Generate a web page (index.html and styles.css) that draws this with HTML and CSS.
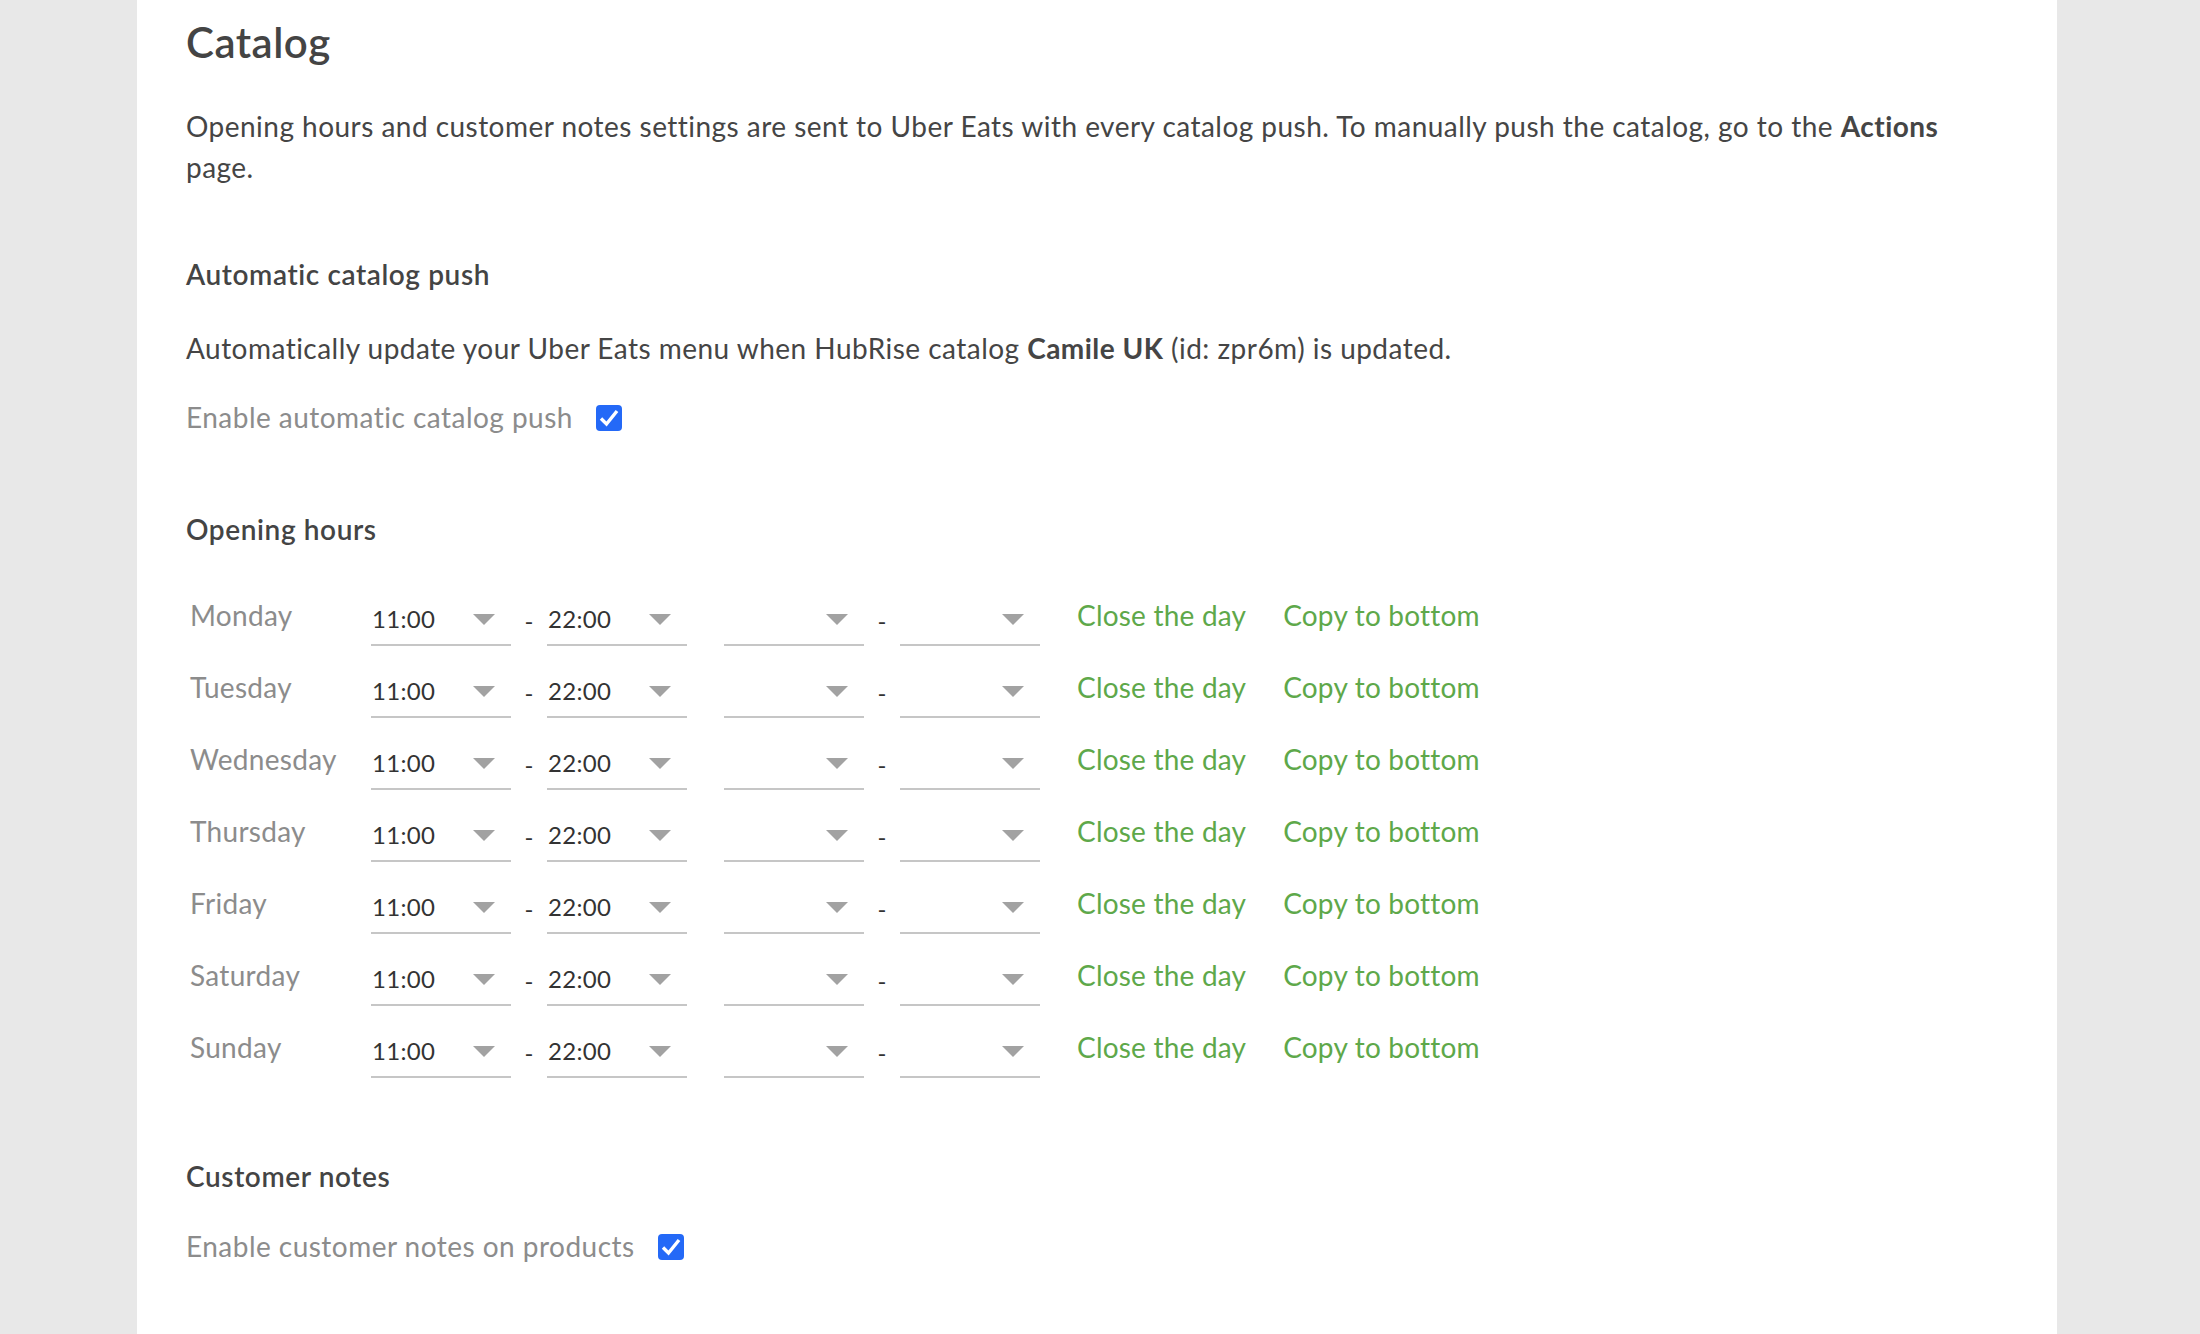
FILE: index.html
```html
<!DOCTYPE html>
<html lang="en">
<head>
<meta charset="utf-8">
<title>Catalog</title>
<link rel="stylesheet" href="styles.css">
</head>
<body>
<div class="page">
  <main class="panel">
    <h1 class="title">Catalog</h1>
    <p class="intro">Opening hours and customer notes settings are sent to Uber Eats with every catalog push. To manually push the catalog, go to the <b>Actions</b> page.</p>

    <section class="section s-auto">
      <h2 class="section-title">Automatic catalog push</h2>
      <p class="text">Automatically update your Uber Eats menu when HubRise catalog <b>Camile UK</b> (id: zpr6m) is updated.</p>
      <label class="check-row">
        <span>Enable automatic catalog push</span>
        <span class="checkbox"><svg width="26" height="26" viewBox="0 0 26 26"><path d="M5 13.5 L10.5 19 L21 6" fill="none" stroke="#fff" stroke-width="3.4" stroke-linejoin="miter"/></svg></span>
      </label>
    </section>

    <section class="section s-hours">
      <h2 class="section-title">Opening hours</h2>
      <div class="hours">
        <div class="day-row">
          <span class="day">Monday</span>
          <div class="range"><div class="select"><span class="val">11:00</span><svg class="arrow" width="22" height="11" viewBox="0 0 22 11"><polygon points="0,0 22,0 11,11"/></svg></div><span class="dash">-</span><div class="select"><span class="val">22:00</span><svg class="arrow" width="22" height="11" viewBox="0 0 22 11"><polygon points="0,0 22,0 11,11"/></svg></div></div>
          <div class="range"><div class="select"><span class="val"></span><svg class="arrow" width="22" height="11" viewBox="0 0 22 11"><polygon points="0,0 22,0 11,11"/></svg></div><span class="dash">-</span><div class="select"><span class="val"></span><svg class="arrow" width="22" height="11" viewBox="0 0 22 11"><polygon points="0,0 22,0 11,11"/></svg></div></div>
          <a class="link">Close the day</a>
          <a class="link">Copy to bottom</a>
        </div>
        <div class="day-row">
          <span class="day">Tuesday</span>
          <div class="range"><div class="select"><span class="val">11:00</span><svg class="arrow" width="22" height="11" viewBox="0 0 22 11"><polygon points="0,0 22,0 11,11"/></svg></div><span class="dash">-</span><div class="select"><span class="val">22:00</span><svg class="arrow" width="22" height="11" viewBox="0 0 22 11"><polygon points="0,0 22,0 11,11"/></svg></div></div>
          <div class="range"><div class="select"><span class="val"></span><svg class="arrow" width="22" height="11" viewBox="0 0 22 11"><polygon points="0,0 22,0 11,11"/></svg></div><span class="dash">-</span><div class="select"><span class="val"></span><svg class="arrow" width="22" height="11" viewBox="0 0 22 11"><polygon points="0,0 22,0 11,11"/></svg></div></div>
          <a class="link">Close the day</a>
          <a class="link">Copy to bottom</a>
        </div>
        <div class="day-row">
          <span class="day">Wednesday</span>
          <div class="range"><div class="select"><span class="val">11:00</span><svg class="arrow" width="22" height="11" viewBox="0 0 22 11"><polygon points="0,0 22,0 11,11"/></svg></div><span class="dash">-</span><div class="select"><span class="val">22:00</span><svg class="arrow" width="22" height="11" viewBox="0 0 22 11"><polygon points="0,0 22,0 11,11"/></svg></div></div>
          <div class="range"><div class="select"><span class="val"></span><svg class="arrow" width="22" height="11" viewBox="0 0 22 11"><polygon points="0,0 22,0 11,11"/></svg></div><span class="dash">-</span><div class="select"><span class="val"></span><svg class="arrow" width="22" height="11" viewBox="0 0 22 11"><polygon points="0,0 22,0 11,11"/></svg></div></div>
          <a class="link">Close the day</a>
          <a class="link">Copy to bottom</a>
        </div>
        <div class="day-row">
          <span class="day">Thursday</span>
          <div class="range"><div class="select"><span class="val">11:00</span><svg class="arrow" width="22" height="11" viewBox="0 0 22 11"><polygon points="0,0 22,0 11,11"/></svg></div><span class="dash">-</span><div class="select"><span class="val">22:00</span><svg class="arrow" width="22" height="11" viewBox="0 0 22 11"><polygon points="0,0 22,0 11,11"/></svg></div></div>
          <div class="range"><div class="select"><span class="val"></span><svg class="arrow" width="22" height="11" viewBox="0 0 22 11"><polygon points="0,0 22,0 11,11"/></svg></div><span class="dash">-</span><div class="select"><span class="val"></span><svg class="arrow" width="22" height="11" viewBox="0 0 22 11"><polygon points="0,0 22,0 11,11"/></svg></div></div>
          <a class="link">Close the day</a>
          <a class="link">Copy to bottom</a>
        </div>
        <div class="day-row">
          <span class="day">Friday</span>
          <div class="range"><div class="select"><span class="val">11:00</span><svg class="arrow" width="22" height="11" viewBox="0 0 22 11"><polygon points="0,0 22,0 11,11"/></svg></div><span class="dash">-</span><div class="select"><span class="val">22:00</span><svg class="arrow" width="22" height="11" viewBox="0 0 22 11"><polygon points="0,0 22,0 11,11"/></svg></div></div>
          <div class="range"><div class="select"><span class="val"></span><svg class="arrow" width="22" height="11" viewBox="0 0 22 11"><polygon points="0,0 22,0 11,11"/></svg></div><span class="dash">-</span><div class="select"><span class="val"></span><svg class="arrow" width="22" height="11" viewBox="0 0 22 11"><polygon points="0,0 22,0 11,11"/></svg></div></div>
          <a class="link">Close the day</a>
          <a class="link">Copy to bottom</a>
        </div>
        <div class="day-row">
          <span class="day">Saturday</span>
          <div class="range"><div class="select"><span class="val">11:00</span><svg class="arrow" width="22" height="11" viewBox="0 0 22 11"><polygon points="0,0 22,0 11,11"/></svg></div><span class="dash">-</span><div class="select"><span class="val">22:00</span><svg class="arrow" width="22" height="11" viewBox="0 0 22 11"><polygon points="0,0 22,0 11,11"/></svg></div></div>
          <div class="range"><div class="select"><span class="val"></span><svg class="arrow" width="22" height="11" viewBox="0 0 22 11"><polygon points="0,0 22,0 11,11"/></svg></div><span class="dash">-</span><div class="select"><span class="val"></span><svg class="arrow" width="22" height="11" viewBox="0 0 22 11"><polygon points="0,0 22,0 11,11"/></svg></div></div>
          <a class="link">Close the day</a>
          <a class="link">Copy to bottom</a>
        </div>
        <div class="day-row">
          <span class="day">Sunday</span>
          <div class="range"><div class="select"><span class="val">11:00</span><svg class="arrow" width="22" height="11" viewBox="0 0 22 11"><polygon points="0,0 22,0 11,11"/></svg></div><span class="dash">-</span><div class="select"><span class="val">22:00</span><svg class="arrow" width="22" height="11" viewBox="0 0 22 11"><polygon points="0,0 22,0 11,11"/></svg></div></div>
          <div class="range"><div class="select"><span class="val"></span><svg class="arrow" width="22" height="11" viewBox="0 0 22 11"><polygon points="0,0 22,0 11,11"/></svg></div><span class="dash">-</span><div class="select"><span class="val"></span><svg class="arrow" width="22" height="11" viewBox="0 0 22 11"><polygon points="0,0 22,0 11,11"/></svg></div></div>
          <a class="link">Close the day</a>
          <a class="link">Copy to bottom</a>
        </div>
      </div>
    </section>

    <section class="section s-notes">
      <h2 class="section-title">Customer notes</h2>
      <label class="check-row check-row-tight">
        <span>Enable customer notes on products</span>
        <span class="checkbox"><svg width="26" height="26" viewBox="0 0 26 26"><path d="M5 13.5 L10.5 19 L21 6" fill="none" stroke="#fff" stroke-width="3.4" stroke-linejoin="miter"/></svg></span>
      </label>
    </section>
  </main>
</div>
</body>
</html>
```

FILE: styles.css
```css
* {
  box-sizing: border-box;
}

html,
body {
  margin: 0;
  padding: 0;
}

body {
  background: #e8e8e8;
  font-family: Lato, "Noto Sans", sans-serif;
  color: #454545;
  letter-spacing: 0.47px;
  overflow: hidden;
}

.page {
  padding-left: 137px;
}

.panel {
  width: 1920px;
  min-height: 100vh;
  background: #ffffff;
  padding: 18px 49px 40px;
}

.title {
  margin: 0;
  font-size: 42px;
  line-height: 48px;
  font-weight: 600;
  color: #444;
  letter-spacing: 0.5px;
}

.intro {
  margin: 40px 0 0;
  font-size: 28px;
  line-height: 41px;
}

.intro b,
.text b {
  font-weight: 700;
}

.section-title {
  margin: 0;
  font-size: 28px;
  line-height: 41px;
  font-weight: 600;
  color: #444;
  letter-spacing: 0.6px;
}

.s-auto {
  margin-top: 66px;
}

.s-hours {
  margin-top: 71px;
}

.s-notes {
  margin-top: 65px;
}

.text {
  margin: 33px 0 0;
  font-size: 28px;
  line-height: 41px;
}

.check-row {
  display: flex;
  align-items: center;
  gap: 23px;
  margin-top: 28px;
  font-size: 28px;
  line-height: 41px;
  color: #8c8c8c;
}

.check-row-tight {
  margin-top: 29px;
}

.checkbox {
  width: 26px;
  height: 26px;
  border-radius: 4px;
  background: #2469f7;
  display: flex;
}

.hours {
  margin-top: 37px;
  padding-left: 4px;
}

.day-row {
  display: flex;
  align-items: flex-start;
  height: 72px;
  padding-top: 13px;
  gap: 37px;
}

.day {
  width: 144px;
  font-size: 28px;
  line-height: 30px;
  color: #8c8c8c;
  letter-spacing: 0.3px;
}

.range {
  display: flex;
  align-items: flex-start;
  gap: 15px;
}

.select {
  width: 140px;
  height: 46px;
  border-bottom: 2px solid #c6c6c6;
  display: flex;
  align-items: center;
  justify-content: space-between;
  padding: 0 16px 6px 1px;
  font-size: 24px;
  color: #333;
  letter-spacing: 0.3px;
}

.val {
  line-height: 1;
}

.arrow {
  fill: #a2a2a2;
  display: block;
}

.dash {
  width: 6px;
  height: 46px;
  display: flex;
  align-items: center;
  justify-content: center;
  padding-bottom: 6px;
  font-size: 24px;
  color: #333;
  letter-spacing: 0;
}

.link {
  font-size: 28px;
  line-height: 30px;
  color: #5ea84a;
  letter-spacing: 0.2px;
  cursor: pointer;
}
```
